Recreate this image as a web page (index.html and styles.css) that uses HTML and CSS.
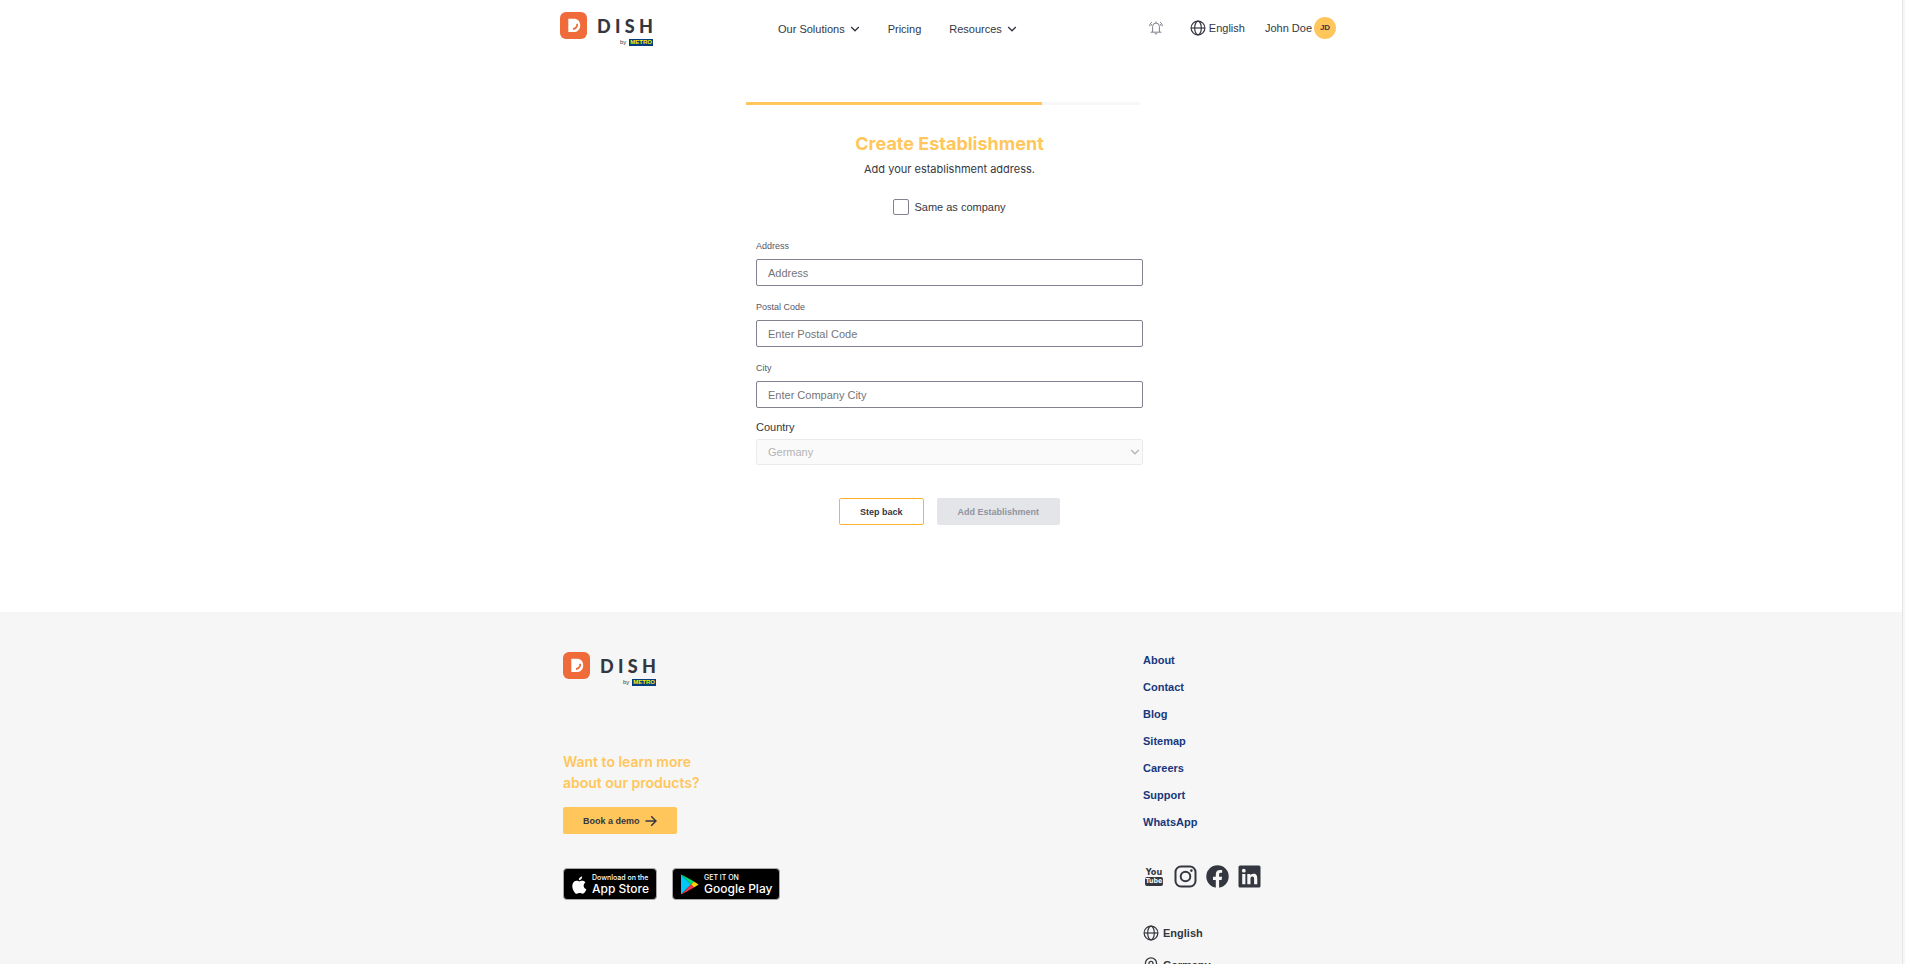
FILE: index.html
```html
<!DOCTYPE html>
<html lang="en">
<head>
<meta charset="utf-8">
<title>DISH - Create Establishment</title>
<link rel="stylesheet" href="styles.css">
</head>
<body>
<svg class="sprite" aria-hidden="true">
  <symbol id="globe" viewBox="0 0 16 16"><g fill="none" stroke="currentColor" stroke-width="1.2"><circle cx="8" cy="8" r="6.9"/><ellipse cx="8" cy="8" rx="3.3" ry="6.9"/><path d="M1 8h14"/></g></symbol>
  <symbol id="chevron" viewBox="0 0 10 6"><path d="M1.2 1l3.8 3.8L8.8 1" fill="none" stroke="currentColor" stroke-width="1.3"/></symbol>
  <symbol id="dish" viewBox="0 0 27 27"><rect width="27" height="27" rx="6" fill="#ef6b3a"/><path d="M8.3 6.8h5.500c4 0 6.400 2.700 6.400 6.600s-2.700 6.700-6.500 6.700H8.300z" fill="#fff"/><path d="M17.200 11.800c.2 2.800-1.400 4.700-4.200 5.300" fill="none" stroke="#ef6b3a" stroke-width="1.700"/></symbol>
</svg>
<div class="page">
  <header class="header wrap">
    <a class="logo" href="#" aria-label="DISH by METRO">
      <svg class="logo-mark"><use href="#dish"/></svg>
      <span class="logo-words">
        <span class="logo-name"><span>D</span><span>I</span><span>S</span><span>H</span></span>
        <span class="logo-by">by <b>METRO</b></span>
      </span>
    </a>
    <nav class="nav">
      <button type="button">Our Solutions <svg class="chev"><use href="#chevron"/></svg></button>
      <a href="#">Pricing</a>
      <button type="button">Resources <svg class="chev"><use href="#chevron"/></svg></button>
    </nav>
    <div class="tools">
      <button type="button" class="bell" aria-label="Notifications"><svg viewBox="0 0 14 14" width="14" height="14" fill="none" stroke="#80828f" stroke-width="1"><path d="M3.600 11V5.500a3.400 3.400 0 0 1 6.800 0V11M1.500 11.200h11M5.800 12.800h2.400M7 .5v1.600M2.900 1.200C1.500 2 .7 3.400.6 5.200M11.100 1.200c1.400.8 2.200 2.200 2.300 4M2.600 3.200l-.5 1.500M11.400 3.200l.5 1.500"/></svg></button>
      <button type="button" class="lang"><svg class="globe"><use href="#globe"/></svg>English</button>
      <button type="button" class="user">John Doe <span class="avatar">JD</span></button>
    </div>
  </header>

  <main class="main">
    <progress class="progress" value="75" max="100" aria-label="Registration progress"></progress>
    <form class="form">
      <h1>Create Establishment</h1>
      <p class="lead">Add your establishment address.</p>
      <label class="same"><input type="checkbox">Same as company</label>
      <div class="field"><label for="address">Address</label><input id="address" type="text" placeholder="Address"></div>
      <div class="field"><label for="postal">Postal Code</label><input id="postal" type="text" placeholder="Enter Postal Code"></div>
      <div class="field"><label for="city">City</label><input id="city" type="text" placeholder="Enter Company City"></div>
      <div class="field country"><label for="country">Country</label>
        <div class="select"><select id="country" disabled><option>Germany</option></select><svg class="chev"><use href="#chevron"/></svg></div>
      </div>
      <div class="actions">
        <button type="button" class="btn back">Step back</button>
        <button type="submit" class="btn add" disabled>Add Establishment</button>
      </div>
    </form>
  </main>

  <footer class="footer">
    <div class="footer-in wrap">
      <div class="promo">
        <a class="logo" href="#" aria-label="DISH by METRO">
          <svg class="logo-mark"><use href="#dish"/></svg>
          <span class="logo-words">
            <span class="logo-name"><span>D</span><span>I</span><span>S</span><span>H</span></span>
            <span class="logo-by">by <b>METRO</b></span>
          </span>
        </a>
        <h2>Want to learn more<br>about our products?</h2>
        <a class="demo" href="#">Book a demo <svg width="12" height="12" viewBox="0 0 12 12" fill="none" stroke="currentColor" stroke-width="1.500"><path d="M.5 6h10.300M6.200 1.200L11 6l-4.800 4.800"/></svg></a>
        <div class="stores">
          <a class="store" href="#">
            <svg width="16" height="19" viewBox="0 0 13 16" fill="#fff"><path d="M11 9.500c0-1.700 1.400-2.500 1.500-2.600-.8-1.200-2.100-1.400-2.500-1.400-1.100-.1-2.100.6-2.600.6-.6 0-1.400-.6-2.300-.6C3.900 5.500 2.700 6.200 2.100 7.300c-1.300 2.200-.3 5.500.9 7.300.6.900 1.300 1.900 2.300 1.800.9 0 1.300-.6 2.400-.6s1.400.6 2.400.6 1.600-.9 2.200-1.700c.7-1 1-2 1-2-.1-.1-2.300-.8-2.300-3.200z" transform="translate(-.6 -.6)"/><path d="M8.400 3.400c.5-.6.8-1.400.7-2.200-.7 0-1.500.5-2 1.100-.5.500-.8 1.300-.7 2.100.8.100 1.500-.4 2-1z"/></svg>
            <span class="store-text"><small>Download on the</small>App Store</span>
          </a>
          <a class="store play" href="#">
            <svg width="19" height="21" viewBox="0 0 19 21"><path d="M1 .5v20l10-10z" fill="#00c8f8"/><path d="M1 .3l13 7.200-3 3z" fill="#00e074"/><path d="M14 7.500l4.600 3-4.600 3-3-3z" fill="#ffd000"/><path d="M1 20.700l13-7.200-3-3z" fill="#f8344a"/></svg>
            <span class="store-text"><small>GET IT ON</small>Google Play</span>
          </a>
        </div>
      </div>
      <div class="side">
        <ul class="links">
          <li><a href="#">About</a></li>
          <li><a href="#">Contact</a></li>
          <li><a href="#">Blog</a></li>
          <li><a href="#">Sitemap</a></li>
          <li><a href="#">Careers</a></li>
          <li><a href="#">Support</a></li>
          <li><a href="#">WhatsApp</a></li>
        </ul>
        <div class="social">
          <a href="#" aria-label="YouTube" class="yt"><span>You</span><span class="tube">Tube</span></a>
          <a href="#" aria-label="Instagram"><svg width="23" height="23" viewBox="0 0 23 23" fill="none" stroke="#34373f" stroke-width="2"><rect x="1.500" y="1.500" width="20" height="20" rx="5.500"/><circle cx="11.500" cy="11.500" r="4.800"/><circle cx="17.400" cy="5.600" r="1.300" fill="#34373f" stroke="none"/></svg></a>
          <a href="#" aria-label="Facebook"><svg width="23" height="23" viewBox="0 0 23 23"><circle cx="11.500" cy="11.500" r="11.200" fill="#34373f"/><path d="M9.800 23v-8H7v-3.300h2.800V9.300c0-2.900 1.700-4.400 4.300-4.400.9 0 2 .2 2 .2v2.700h-1.300c-1.400 0-1.700.8-1.700 1.700v2.200h3l-.5 3.300h-2.500v8z" fill="#f6f6f6"/></svg></a>
          <a href="#" aria-label="LinkedIn"><svg width="23" height="23" viewBox="0 0 23 23"><rect x=".5" y=".5" width="22" height="22" rx="1.500" fill="#34373f"/><g fill="#f6f6f6"><circle cx="5.800" cy="5.700" r="1.900"/><path d="M4.200 9h3.200v10.300H4.200zM9.300 9h3v1.500c.5-.9 1.500-1.700 3.100-1.700 3.200 0 3.900 2.100 3.900 4.900v5.600h-3.200v-5c0-1.300 0-2.800-1.700-2.800s-1.900 1.300-1.900 2.700v5.100H9.300z"/></g></svg></a>
        </div>
        <ul class="locale">
          <li><svg class="globe"><use href="#globe"/></svg>English</li>
          <li><svg class="globe" viewBox="0 0 16 16" fill="none" stroke="currentColor" stroke-width="1.300"><path d="M8 15.200C4.500 11.800 2.400 9.200 2.400 6.400a5.600 5.600 0 0 1 11.200 0c0 2.800-2.100 5.400-5.600 8.800z"/><circle cx="8" cy="6.400" r="2"/></svg>Germany</li>
        </ul>
      </div>
    </div>
  </footer>
</div>
</body>
</html>
```
FILE: styles.css
```css
* { box-sizing: border-box; }
html { height: 100%; overflow: hidden; }
body {
  margin: 0;
  height: 100%;
  overflow: hidden;
  border-right: 2px solid #f6f6f6;
  font: 11px/16px "Liberation Sans", Arial, sans-serif;
  color: #34373f;
  background: #fff;
}
button, input, select { font: inherit; color: inherit; }
button { padding: 0; border: 0; background: none; }
a { color: inherit; text-decoration: none; }
svg { flex: none; }
ul { margin: 0; padding: 0; list-style: none; }
.sprite { display: none; }
.page { min-height: 100%; display: flex; flex-direction: column; border-right: 1px solid #e6e6e6; }
.wrap { width: 100%; max-width: 776px; margin: 0 auto; }

.header { display: flex; align-items: flex-start; position: relative; right: 3px; padding-top: 12px; }
.logo { display: flex; gap: 10px; }
.logo-mark { width: 27px; height: 27px; }
.logo-words { width: 56px; padding-top: 5px; }
.logo-name {
  display: flex;
  justify-content: space-between;
  font: 900 18px/18px Lato, sans-serif;
}
.logo-by {
  display: flex;
  justify-content: flex-end;
  align-items: center;
  gap: 3px;
  margin-top: 4px;
  font-size: 6px;
  line-height: 7px;
}
.logo-by b { padding: 0 1px; color: #ffed00; background: #003d7c; }
.nav { display: flex; gap: 28px; margin-left: 125px; padding-top: 9px; }
.nav button { display: flex; align-items: center; gap: 5px; }
.chev { width: 10px; height: 6px; }
.tools { display: flex; align-items: center; margin-left: auto; padding-top: 5px; }
.bell { display: flex; }
.lang { display: flex; align-items: center; gap: 3px; margin-left: 27px; }
.globe { width: 16px; height: 16px; }
.user { display: flex; align-items: center; gap: 2px; margin-left: 20px; }
.avatar {
  width: 22px;
  border-radius: 50%;
  background: #ffc65c;
  font: bold 8px/22px "Liberation Sans", sans-serif;
  text-align: center;
}

.main { display: flex; flex-direction: column; align-items: center; padding: 56px 3px 87px 0; }
.progress {
  appearance: none;
  display: block;
  width: 394px;
  height: 3px;
  margin-right: 13px;
  border: 0;
  background: #f7f7f7;
}
.progress::-webkit-progress-bar { background: #f7f7f7; }
.progress::-webkit-progress-value { background: #ffc65c; }
.form { display: flex; flex-direction: column; width: 387px; padding-top: 27px; }
h1 { margin: 0; font: bold 18px/24px Inter, sans-serif; color: #ffc65c; text-align: center; }
.lead { margin: 5px 0 0; font: 11px/16px Inter, sans-serif; text-align: center; }
.same { display: flex; justify-content: center; align-items: center; gap: 5px; margin-top: 22px; }
.same input {
  appearance: none;
  width: 16px;
  height: 16px;
  margin: 0;
  border: 1px solid #80828f;
  border-radius: 2px;
}
.field { display: flex; flex-direction: column; gap: 7px; margin-top: 15px; font-size: 9px; line-height: 12px; color: #565968; }
.same + .field { margin-top: 25px; }
.field input, .field select {
  width: 100%;
  height: 27px;
  padding: 0 11px;
  border: 1px solid #80828f;
  border-radius: 2px;
  background: #fff;
  font-size: 11px;
}
.field input::placeholder { color: #757575; }
.field.country { gap: 4px; margin-top: 11px; font-size: 11px; line-height: 16px; color: #34373f; }
.select { position: relative; display: flex; }
.select select { appearance: none; height: 26px; border-color: #ebebeb; background: #fafafa; color: #b4b4b4; opacity: 1; }
.select .chev { position: absolute; right: 3px; top: 10px; color: #b4b4b4; }
.actions { display: flex; justify-content: center; gap: 13px; margin-top: 33px; }
.btn { height: 27px; padding: 0 20px; border: 1px solid transparent; border-radius: 2px; font-size: 9px; font-weight: bold; }
.back { border-color: #ffb32c; }
.add { background: #e4e5e9; color: #91939e; }

.footer { flex: 1; background: #f6f6f6; }
.footer-in { display: flex; justify-content: space-between; padding: 40px 0 0; }
h2 { margin: 65px 0 0; font: 600 14px/21px Inter, sans-serif; color: #ffc65c; }
.demo {
  display: inline-flex;
  align-items: center;
  gap: 5px;
  height: 27px;
  margin-top: 14px;
  padding: 0 20px;
  border-radius: 2px;
  background: #ffc65c;
  font-size: 9px;
  font-weight: bold;
}
.stores { display: flex; gap: 15px; margin-top: 34px; }
.store {
  display: flex;
  align-items: center;
  gap: 5px;
  height: 32px;
  padding: 0 7px;
  border: 1px solid #a6a6a6;
  border-radius: 4px;
  background: #000;
  color: #fff;
}
.store-text { font: 500 12px/13px Inter, sans-serif; }
.store small { display: block; font-size: 7px; line-height: 8px; }
.side { width: 196px; }
.links { color: #16387c; font-weight: bold; line-height: 27px; margin-top: -5px; }
.social { display: flex; align-items: center; gap: 9px; margin-top: 29px; }
.social a { display: flex; }
.social .yt { flex-direction: column; align-items: center; width: 22px; font: bold 9px/9px "Liberation Sans Narrow", "DejaVu Sans Condensed", sans-serif; }
.tube { padding: 0 1px; border-radius: 2px; color: #f6f6f6; background: #34373f; font-size: 7px; }
.locale { margin-top: 37px; font-weight: bold; }
.locale li { display: flex; align-items: center; gap: 4px; margin-bottom: 16px; }
```
